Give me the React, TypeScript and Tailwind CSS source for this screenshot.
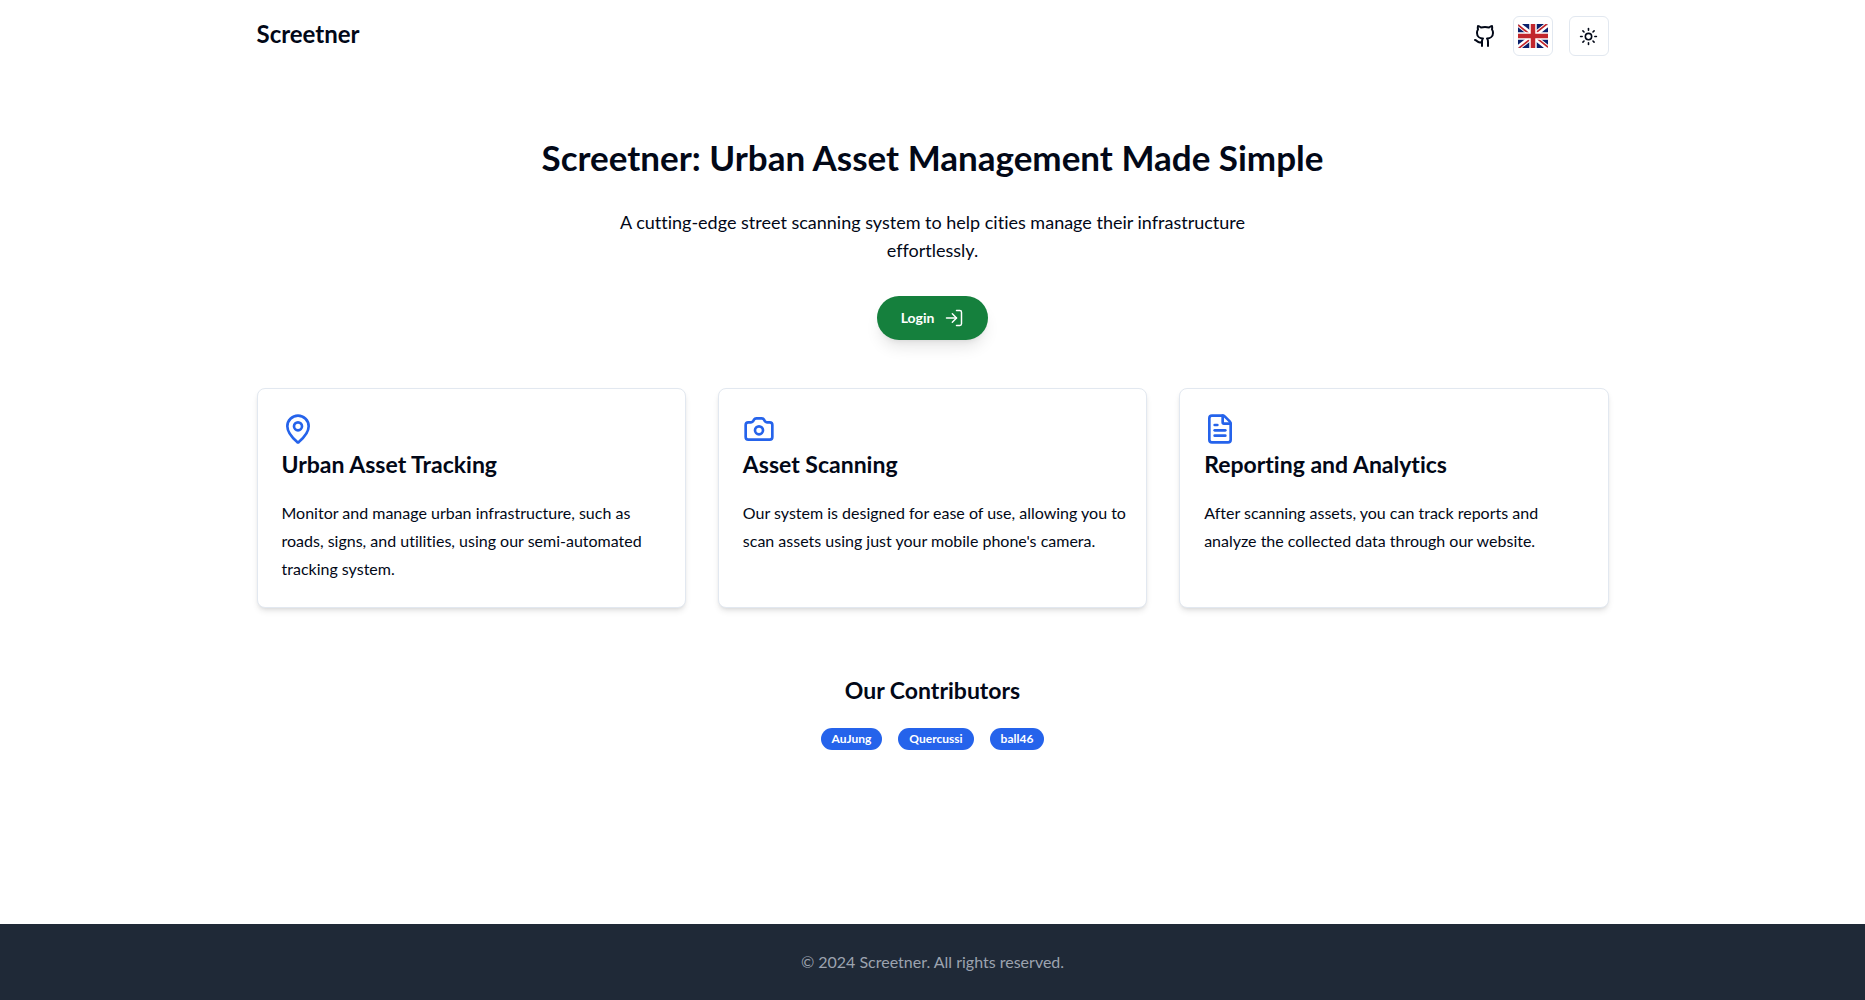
import { Camera, FileText, Github, LogIn, MapPin, Sun } from "lucide-react";
import type { LucideIcon } from "lucide-react";

type Feature = { icon: LucideIcon; title: string; text: string };

const features: Feature[] = [
  {
    icon: MapPin,
    title: "Urban Asset Tracking",
    text: "Monitor and manage urban infrastructure, such as roads, signs, and utilities, using our semi-automated tracking system.",
  },
  {
    icon: Camera,
    title: "Asset Scanning",
    text: "Our system is designed for ease of use, allowing you to scan assets using just your mobile phone's camera.",
  },
  {
    icon: FileText,
    title: "Reporting and Analytics",
    text: "After scanning assets, you can track reports and analyze the collected data through our website.",
  },
];

const contributors = ["AuJung", "Quercussi", "ball46"];

function UnionJack() {
  return (
    <svg viewBox="0 0 60 48" className="h-6 w-[30px]" aria-hidden="true">
      <clipPath id="flag-edge">
        <rect width="60" height="48" rx="3" />
      </clipPath>
      <g clipPath="url(#flag-edge)">
        <rect width="60" height="48" fill="#0a1f6b" />
        <path d="M0 0L60 48M60 0L0 48" stroke="#fff" strokeWidth="10" />
        <path d="M-1 1L27 23.4M61 47L33 24.6M59 -1L31 21.4M1 49L29 26.6" stroke="#c1272d" strokeWidth="3.4" />
        <path d="M30 0V48M0 24H60" stroke="#fff" strokeWidth="15" />
        <path d="M30 0V48M0 24H60" stroke="#c1272d" strokeWidth="9" />
      </g>
    </svg>
  );
}

function Header() {
  const square =
    "flex size-10 items-center justify-center rounded-md border border-[#e2e8f0] bg-white";
  return (
    <header className="mx-auto flex w-full max-w-[1400px] items-center justify-between px-6 py-4">
      <a href="#" className="pb-1 text-2xl font-bold">
        Screetner
      </a>
      <nav className="flex items-center gap-4">
        <a href="#" aria-label="GitHub">
          <Github className="size-6" />
        </a>
        <button type="button" aria-label="Change language" className={square}>
          <UnionJack />
        </button>
        <button type="button" aria-label="Toggle theme" className={square}>
          <Sun className="size-[19px]" />
        </button>
      </nav>
    </header>
  );
}

function FeatureCard({ icon: Icon, title, text }: Feature) {
  return (
    <article className="rounded-lg border border-[#e2e8f0] bg-white py-6 pr-4 pl-6 shadow-md">
      <Icon className="size-8 text-[#2563eb]" />
      <h2 className="pt-1 text-[23px] leading-[30px] font-bold">{title}</h2>
      <p className="pt-5 leading-7">{text}</p>
    </article>
  );
}

export default function App() {
  return (
    <div className="flex min-h-screen flex-col bg-white font-['Lato',sans-serif] text-[#020817] [font-variant-ligatures:none]">
      <Header />
      <main className="mx-auto flex w-full max-w-[1400px] grow flex-col items-center px-6 pt-16">
        <h1 className="text-center text-[35px] leading-[42px] font-bold">
          Screetner: Urban Asset Management Made Simple
        </h1>
        <p className="mt-[30px] max-w-2xl text-center text-lg leading-7">
          A cutting-edge street scanning system to help cities manage their infrastructure effortlessly.
        </p>
        <button
          type="button"
          className="mt-8 flex h-11 items-center gap-2.5 rounded-full bg-[#15803d] px-6 text-sm font-bold text-white shadow-lg"
        >
          Login
          <LogIn className="size-5" strokeWidth={1.75} />
        </button>
        <section className="mt-12 grid w-full grid-cols-1 gap-8 md:grid-cols-3">
          {features.map((feature) => (
            <FeatureCard key={feature.title} {...feature} />
          ))}
        </section>
        <section className="mt-16 flex flex-col items-center pb-16">
          <h2 className="text-[23px] leading-9 font-bold">Our Contributors</h2>
          <ul className="mt-5 flex gap-4">
            {contributors.map((name) => (
              <li key={name} className="rounded-full bg-[#2563eb] px-[11px] py-[3px] text-xs font-bold text-white">
                {name}
              </li>
            ))}
          </ul>
        </section>
      </main>
      <footer className="bg-[#1f2937] px-6 py-[26px] text-center text-[#9ca3af]">
        <p>© 2024 Screetner. All rights reserved.</p>
      </footer>
    </div>
  );
}
